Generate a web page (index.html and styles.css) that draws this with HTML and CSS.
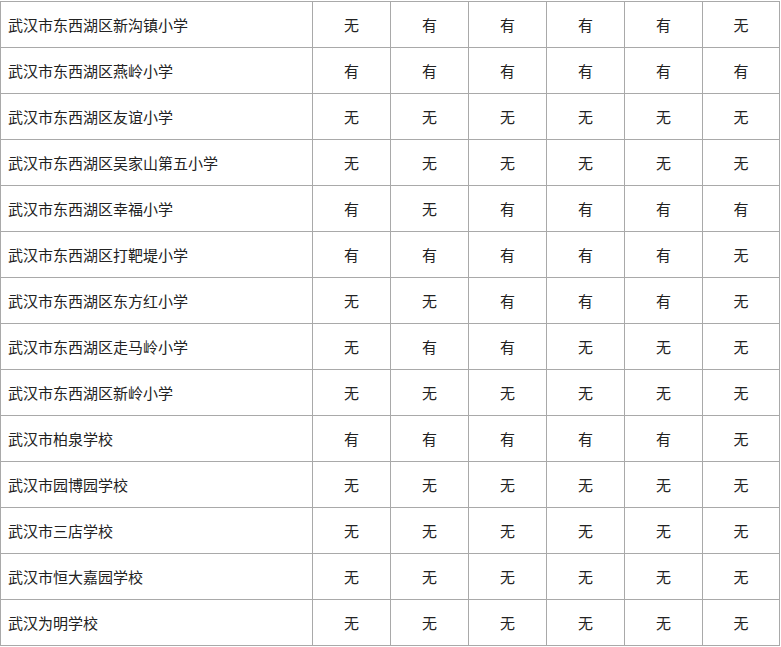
FILE: index.html
```html
<!DOCTYPE html>
<html lang="zh">
<head>
<meta charset="utf-8">
<link rel="stylesheet" href="styles.css">
</head>
<body>
<table class="grid">
<colgroup><col class="c-name"><col class="c-v"><col class="c-v"><col class="c-v"><col class="c-v"><col class="c-v"><col class="c-last"></colgroup>
<tbody>
<tr><td>武汉市东西湖区新沟镇小学</td><td>无</td><td>有</td><td>有</td><td>有</td><td>有</td><td>无</td></tr>
<tr><td>武汉市东西湖区燕岭小学</td><td>有</td><td>有</td><td>有</td><td>有</td><td>有</td><td>有</td></tr>
<tr><td>武汉市东西湖区友谊小学</td><td>无</td><td>无</td><td>无</td><td>无</td><td>无</td><td>无</td></tr>
<tr><td>武汉市东西湖区吴家山第五小学</td><td>无</td><td>无</td><td>无</td><td>无</td><td>无</td><td>无</td></tr>
<tr><td>武汉市东西湖区幸福小学</td><td>有</td><td>无</td><td>有</td><td>有</td><td>有</td><td>有</td></tr>
<tr><td>武汉市东西湖区打靶堤小学</td><td>有</td><td>有</td><td>有</td><td>有</td><td>有</td><td>无</td></tr>
<tr><td>武汉市东西湖区东方红小学</td><td>无</td><td>无</td><td>有</td><td>有</td><td>有</td><td>无</td></tr>
<tr><td>武汉市东西湖区走马岭小学</td><td>无</td><td>有</td><td>有</td><td>无</td><td>无</td><td>无</td></tr>
<tr><td>武汉市东西湖区新岭小学</td><td>无</td><td>无</td><td>无</td><td>无</td><td>无</td><td>无</td></tr>
<tr><td>武汉市柏泉学校</td><td>有</td><td>有</td><td>有</td><td>有</td><td>有</td><td>无</td></tr>
<tr><td>武汉市园博园学校</td><td>无</td><td>无</td><td>无</td><td>无</td><td>无</td><td>无</td></tr>
<tr><td>武汉市三店学校</td><td>无</td><td>无</td><td>无</td><td>无</td><td>无</td><td>无</td></tr>
<tr><td>武汉市恒大嘉园学校</td><td>无</td><td>无</td><td>无</td><td>无</td><td>无</td><td>无</td></tr>
<tr><td>武汉为明学校</td><td>无</td><td>无</td><td>无</td><td>无</td><td>无</td><td>无</td></tr>
</tbody>
</table>
</body>
</html>
```
FILE: styles.css
```css
html, body {
  margin: 0;
  padding: 0;
  background: #ffffff;
}
body {
  padding-top: 1px;
  font-family: "Noto Sans CJK SC", "Noto Sans", sans-serif;
  font-size: 15px;
  color: #222222;
}
.grid {
  border-collapse: collapse;
  table-layout: fixed;
  width: 779px;
}
.c-name { width: 312px; }
.c-v { width: 78px; }
.c-last { width: 77px; }
.grid td {
  border: 1px solid #a9a9a9;
  height: 45px;
  padding: 0;
  text-align: center;
  vertical-align: middle;
  line-height: 20px;
}
.grid td:first-child {
  text-align: left;
  padding-left: 7px;
}
```
